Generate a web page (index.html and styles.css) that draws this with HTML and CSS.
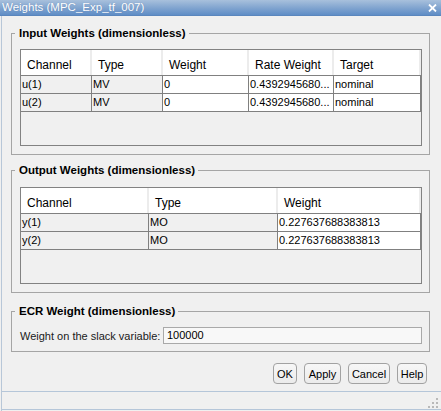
FILE: index.html
```html
<!DOCTYPE html>
<html>
<head>
<meta charset="utf-8">
<title>Weights (MPC_Exp_tf_007)</title>
<link rel="stylesheet" href="styles.css">
</head>
<body>
<div class="window">
  <div class="titlebar">
    <span class="title">Weights (MPC_Exp_tf_007)</span>
    <svg class="close" width="9" height="8" viewBox="0 0 9 8"><path d="M1 0.5 L8 7.5 M8 0.5 L1 7.5" stroke="#fff" stroke-width="1.8" fill="none"/></svg>
  </div>
  <div class="frame">
    <div class="content">
      <fieldset class="group g-input">
        <legend>Input Weights (dimensionless)</legend>
        <div class="pane">
          <div class="thead cols-in">
            <div class="th">Channel</div><div class="th">Type</div><div class="th">Weight</div><div class="th">Rate Weight</div><div class="th">Target</div>
          </div>
          <div class="row cols-in">
            <div class="td ro">u(1)</div><div class="td ro">MV</div><div class="td">0</div><div class="td">0.4392945680...</div><div class="td">nominal</div>
          </div>
          <div class="row cols-in">
            <div class="td ro">u(2)</div><div class="td ro">MV</div><div class="td">0</div><div class="td">0.4392945680...</div><div class="td">nominal</div>
          </div>
        </div>
      </fieldset>

      <fieldset class="group g-output">
        <legend>Output Weights (dimensionless)</legend>
        <div class="pane">
          <div class="thead cols-out">
            <div class="th">Channel</div><div class="th">Type</div><div class="th">Weight</div>
          </div>
          <div class="row cols-out">
            <div class="td ro">y(1)</div><div class="td ro">MO</div><div class="td">0.227637688383813</div>
          </div>
          <div class="row cols-out">
            <div class="td ro">y(2)</div><div class="td ro">MO</div><div class="td">0.227637688383813</div>
          </div>
        </div>
      </fieldset>

      <fieldset class="group g-ecr">
        <legend>ECR Weight (dimensionless)</legend>
        <div class="ecr-row">
          <span class="ecr-label">Weight on the slack variable:</span>
          <div class="field">100000</div>
        </div>
      </fieldset>

      <div class="buttons">
        <button class="btn b-ok">OK</button>
        <button class="btn b-apply">Apply</button>
        <button class="btn b-cancel">Cancel</button>
        <button class="btn b-help">Help</button>
      </div>
    </div>
    <div class="statusbar">
      <svg class="grip" width="10" height="10" viewBox="0 0 10 10">
        <g fill="#b9b9b9">
          <rect x="8" y="0" width="2" height="2"/>
          <rect x="4" y="4" width="2" height="2"/><rect x="8" y="4" width="2" height="2"/>
          <rect x="0" y="8" width="2" height="2"/><rect x="4" y="8" width="2" height="2"/><rect x="8" y="8" width="2" height="2"/>
        </g>
      </svg>
    </div>
  </div>
</div>
</body>
</html>
```

FILE: styles.css
```css
* { box-sizing: border-box; }

html, body {
  margin: 0;
  padding: 0;
  background: #ffffff;
}

body {
  font-family: "Liberation Sans", Arial, sans-serif;
  font-size: 11px;
  color: #000;
}

.window {
  width: 441px;
  height: 411px;
  display: flex;
  flex-direction: column;
  background: #f0f0f0;
}

.titlebar {
  height: 16px;
  flex: 0 0 16px;
  display: flex;
  align-items: center;
  justify-content: space-between;
  padding: 0 4px 0 2px;
  background: linear-gradient(#a8c0dc, #7fa3cf 55%, #5f8dc6);
  border-bottom: 1px solid #5a86bd;
}

.title {
  color: #ffffff;
  font-size: 11.5px;
  line-height: 15px;
  text-shadow: 0 0 1px rgba(40, 70, 120, 0.35);
}

.close {
  display: block;
  margin-right: 0px;
}

.frame {
  flex: 1;
  display: flex;
  flex-direction: column;
  margin-left: 1px;
  border-left: 1px solid #b8c7d8;
}

.content {
  flex: 1;
  padding: 10px 11px 0 9px;
}

.group {
  margin: 0;
  min-width: 0;
  border: 1px solid #a5a5a5;
  padding: 9px 7px 8px 8px;
}

.group legend {
  font-weight: bold;
  font-size: 11.5px;
  line-height: 14px;
  padding: 0 3px 0 4px;
  margin-left: -5px;
  color: #000;
}

.g-output {
  margin-top: 8px;
  padding-top: 10px;
}

.g-ecr {
  margin-top: 11px;
  padding-top: 9px;
  padding-bottom: 7px;
}

.pane {
  height: 97px;
  border: 1px solid #828282;
  background: #f0f0f0;
}

.cols-in {
  display: grid;
  grid-template-columns: 71px 71px 86px 85px 87px;
}

.cols-out {
  display: grid;
  grid-template-columns: 128px 129px 143px;
}

.thead {
  height: 25px;
  background: #ffffff;
}

.th {
  font-size: 12px;
  padding: 8px 0 0 6px;
  line-height: 14px;
  border-right: 2px solid #ececec;
  white-space: nowrap;
}

.row {
  height: 18px;
  border-top: 1px solid #808080;
}

.row:last-child {
  border-bottom: 1px solid #808080;
  height: 19px;
}

.td {
  background: #ffffff;
  border-right: 1px solid #808080;
  padding-left: 1px;
  line-height: 17px;
  white-space: nowrap;
  overflow: hidden;
}

.td.ro {
  background: #f0f0f0;
}

.ecr-row {
  display: flex;
  align-items: center;
  height: 17px;
}

.ecr-label {
  width: 143px;
  font-size: 11px;
  color: #1a1a1a;
}

.field {
  flex: 1;
  height: 17px;
  border: 1px solid #a9a9a9;
  background: #f8f8f8;
  padding-left: 3px;
  line-height: 15px;
  font-size: 11px;
}

.buttons {
  display: flex;
  justify-content: flex-end;
  gap: 7px;
  margin-top: 11px;
  padding-right: 3px;
}

.btn {
  height: 21px;
  padding: 0;
  font-family: "Liberation Sans", Arial, sans-serif;
  font-size: 11px;
  color: #000;
  border: 1px solid #a2a2a2;
  border-radius: 4px;
  background: linear-gradient(#f7f7f7, #ebebeb);
}

.b-ok { width: 24px; }
.b-apply { width: 37px; }
.b-cancel { width: 42px; }
.b-help { width: 30px; }

.statusbar {
  height: 19px;
  flex: 0 0 19px;
  border-top: 1px solid #b5c6d9;
  border-bottom: 1px solid #b5c6d9;
  margin-bottom: 1px;
  display: flex;
  justify-content: flex-end;
  align-items: flex-end;
  padding: 0 3px 1px 0;
}

.grip {
  display: block;
}
```
